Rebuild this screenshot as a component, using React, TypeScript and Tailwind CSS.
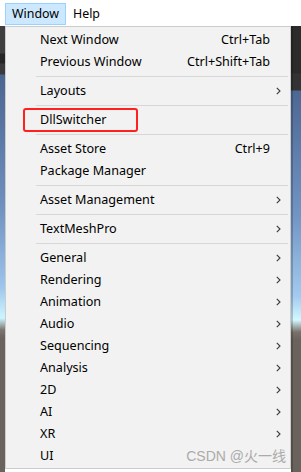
type Item = { label: string; shortcut?: string; sub?: boolean; mark?: boolean };

const groups: Item[][] = [
  [
    { label: "Next Window", shortcut: "Ctrl+Tab" },
    { label: "Previous Window", shortcut: "Ctrl+Shift+Tab" },
  ],
  [{ label: "Layouts", sub: true }],
  [{ label: "DllSwitcher", mark: true }],
  [
    { label: "Asset Store", shortcut: "Ctrl+9" },
    { label: "Package Manager" },
  ],
  [{ label: "Asset Management", sub: true }],
  [{ label: "TextMeshPro", sub: true }],
  [
    { label: "General", sub: true },
    { label: "Rendering", sub: true },
    { label: "Animation", sub: true },
    { label: "Audio", sub: true },
    { label: "Sequencing", sub: true },
    { label: "Analysis", sub: true },
    { label: "2D", sub: true },
    { label: "AI", sub: true },
    { label: "XR", sub: true },
    { label: "UI" },
  ],
];

const Chevron = () => (
  <svg width="5" height="8" viewBox="0 0 5 8" className="absolute right-[9px] top-[7px]">
    <polyline points="0.8,0.8 4,4 0.8,7.2" fill="none" stroke="#3a3a3a" strokeWidth="1.1" />
  </svg>
);

const Row = ({ label, shortcut, sub, mark }: Item) => (
  <div className="relative flex h-[22px] items-center pl-[34px] pr-[20px] text-[12.6px] text-black">
    <span className="flex-1">{label}</span>
    {shortcut && <span>{shortcut}</span>}
    {sub && <Chevron />}
    {mark && (
      <div className="absolute left-[17px] top-[-1px] h-[24px] w-[115px] rounded-[3px] border-2 border-[#ff2020]" />
    )}
  </div>
);

export default function App() {
  return (
    <div className="flex h-[472px] w-[301px] flex-col overflow-hidden bg-white font-['Noto_Sans',sans-serif]">
      <div className="flex h-[26px] shrink-0 items-start pl-[5px] pt-[3px] text-[12.4px] text-black">
        <div className="flex h-[22px] items-center border border-[#99d1ff] bg-[#cce8ff] px-[6px]">Window</div>
        <div className="flex h-[22px] items-center border border-transparent px-[6px]">Help</div>
      </div>
      <div className="flex flex-1">
        <div className="w-[5px] bg-[linear-gradient(to_bottom,#3f3f3f_0px,#3f3f3f_27px,#262626_28px,#262626_37px,#3b3b3b_38px,#3b3b3b_48px,#4a6590_49px,#6f90c0_180px,#9cc4ec_260px,#cdf5ff_292px,#7b7670_304px,#6a625c_312px,#6a625c_100%)]" />
        <div className="relative flex h-[443px] w-[286px] flex-col border border-[#cccccc] bg-[#f2f2f2] pt-[2px] pb-[1px]">
          {groups.map((g, gi) => (
            <div key={gi}>
              {gi > 0 && (
                <div className="flex h-[7px] pt-[3px] pl-[30px] pr-[2px]">
                  <div className="h-px flex-1 bg-[#d7d7d7]" />
                </div>
              )}
              {g.map((it) => (
                <Row key={it.label} {...it} />
              ))}
            </div>
          ))}
          <div className="pointer-events-none absolute bottom-[2px] right-[4px] whitespace-nowrap font-['Liberation_Sans','Noto_Sans_CJK_SC',sans-serif] text-[14px] leading-[20px] text-[#ababab]">
            CSDN @火一线
          </div>
        </div>
        <div className="flex-1 bg-[linear-gradient(to_bottom,#2b2b2b_0px,#2b2b2b_47px,#333_48px,#333_64px,#4c6792_65px,#7295c4_190px,#a3caef_270px,#d3f8ff_294px,#78726c_306px,#6a625c_314px,#6a625c_100%)]">
          <div className="h-full w-[2px] bg-black/20" />
        </div>
      </div>
    </div>
  );
}
